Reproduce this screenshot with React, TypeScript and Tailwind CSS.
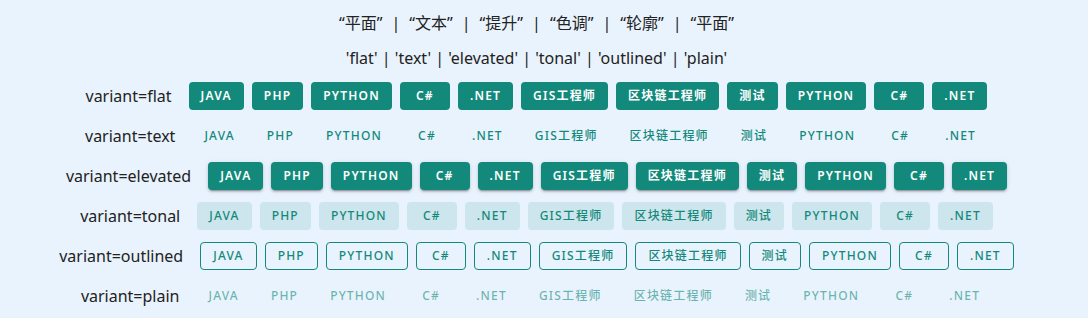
const langs = ["JAVA", "PHP", "PYTHON", "C#", ".NET", "GIS工程师", "区块链工程师", "测试", "PYTHON", "C#", ".NET"]

type Variant = "flat" | "text" | "elevated" | "tonal" | "outlined" | "plain"

const variants: Variant[] = ["flat", "text", "elevated", "tonal", "outlined", "plain"]
const zhNames = ["平面", "文本", "提升", "色调", "轮廓", "平面"]

// full class strings per variant so tailwind picks them up
const variantClass: Record<Variant, string> = {
  flat: "bg-[#12897b] text-white font-semibold",
  text: "text-[#12897b] font-medium",
  elevated:
    "bg-[#12897b] text-white font-semibold shadow-[0_3px_1px_-2px_rgba(0,0,0,0.2),0_2px_2px_0_rgba(0,0,0,0.14),0_1px_5px_0_rgba(0,0,0,0.12)]",
  tonal: "bg-[#cde5ec] text-[#12897b] font-medium",
  outlined: "border border-[#12897b] text-[#12897b] font-medium",
  plain: "text-[#12897b]/60 font-medium",
}

function Btn({ label, variant }: { label: string; variant: Variant }) {
  return (
    <button
      className={`flex h-7 min-w-[50px] items-center justify-center rounded px-3 text-xs uppercase tracking-[0.1em] ${variantClass[variant]}`}
    >
      {label}
    </button>
  )
}

export default function App() {
  return (
    <div
      className="min-h-screen bg-[#e9f3fd] pr-[15px] pt-[11px] text-[#222]"
      style={{ fontFamily: '"Noto Sans", "Noto Sans CJK SC", sans-serif' }}
    >
      <p className="flex h-6 items-center justify-center text-base leading-6">
        {zhNames.map((n, i) => (
          <span key={i} className="flex items-center">
            {i > 0 && <span className="mx-[9px]">|</span>}
            <span>“{n}”</span>
          </span>
        ))}
      </p>
      <p className="mt-[11px] h-6 text-center text-base leading-6">
        'flat' | 'text' | 'elevated' | 'tonal' | 'outlined' | 'plain'
      </p>
      <div className="mt-[6px] flex flex-col">
        {variants.map((v) => (
          <div key={v} className="flex h-10 items-center justify-center">
            <span className="mr-[17px] text-base">variant={v}</span>
            <div className="flex gap-2">
              {langs.map((l, i) => (
                <Btn key={i} label={l} variant={v} />
              ))}
            </div>
          </div>
        ))}
      </div>
    </div>
  )
}
